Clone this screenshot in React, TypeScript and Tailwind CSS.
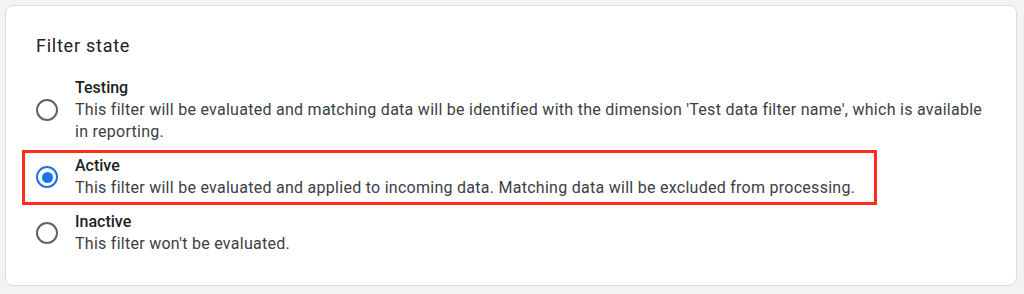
import React from "react";

type Opt = { key: string; title: string; desc: string };

const options: Opt[] = [
  {
    key: "testing",
    title: "Testing",
    desc: "This filter will be evaluated and matching data will be identified with the dimension 'Test data filter name', which is available in reporting.",
  },
  {
    key: "active",
    title: "Active",
    desc: "This filter will be evaluated and applied to incoming data. Matching data will be excluded from processing.",
  },
  {
    key: "inactive",
    title: "Inactive",
    desc: "This filter won't be evaluated.",
  },
];

function Radio({ checked }: { checked: boolean }) {
  return (
    <div
      className={
        "w-[22px] h-[22px] shrink-0 rounded-full border-[2px] flex items-center justify-center " +
        (checked ? "border-[#1a73e8]" : "border-[#5f6368]")
      }
    >
      {checked && <div className="w-[11px] h-[11px] rounded-full bg-[#1a73e8]" />}
    </div>
  );
}

export default function App() {
  const selected = "active";
  return (
    <div
      className="w-[1024px] h-[294px] bg-[#f1f3f4] pt-[5px] pl-[5px] pr-[7px]"
      style={{ fontFamily: "Roboto, 'Liberation Sans', sans-serif" }}
    >
      <div className="h-[281px] bg-white border border-[#dadce0] rounded-[8px] pt-[28px] pl-[30px] pr-[30px]">
        <div className="text-[18px] leading-[24px] tracking-[0.75px] text-[#202124]">Filter state</div>
        <div className="mt-[19px] flex flex-col gap-[12px]">
          {options.map((o) => (
            <div key={o.key} className="relative flex items-center">
              <Radio checked={o.key === selected} />
              <div className="ml-[17px] text-[16px] leading-[22px]">
                <div className="font-medium text-[#202124]">{o.title}</div>
                <div className="text-[#3c4043] tracking-[0.27px]">{o.desc}</div>
              </div>
              {o.key === selected && (
                <div className="absolute left-[-14px] top-[-5px] w-[855px] h-[55px] border-[3px] border-[#fc2d1b] pointer-events-none" />
              )}
            </div>
          ))}
        </div>
      </div>
    </div>
  );
}
